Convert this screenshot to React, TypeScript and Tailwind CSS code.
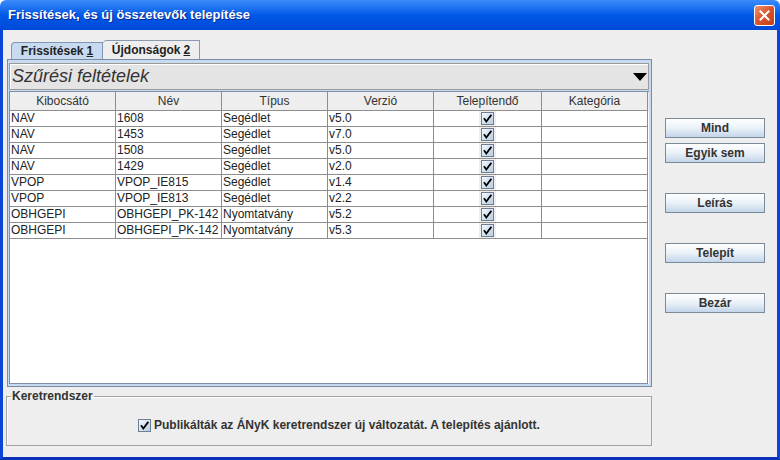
import React from "react";

type Row = {
  issuer: string;
  name: string;
  kind: string;
  version: string;
};

const ROWS: Row[] = [
  { issuer: "NAV", name: "1608", kind: "Segédlet", version: "v5.0" },
  { issuer: "NAV", name: "1453", kind: "Segédlet", version: "v7.0" },
  { issuer: "NAV", name: "1508", kind: "Segédlet", version: "v5.0" },
  { issuer: "NAV", name: "1429", kind: "Segédlet", version: "v2.0" },
  { issuer: "VPOP", name: "VPOP_IE815", kind: "Segédlet", version: "v1.4" },
  { issuer: "VPOP", name: "VPOP_IE813", kind: "Segédlet", version: "v2.2" },
  { issuer: "OBHGEPI", name: "OBHGEPI_PK-142", kind: "Nyomtatvány", version: "v5.2" },
  { issuer: "OBHGEPI", name: "OBHGEPI_PK-142", kind: "Nyomtatvány", version: "v5.3" },
];

const HEADERS = ["Kibocsátó", "Név", "Típus", "Verzió", "Telepítendő", "Kategória"];
const WIDTHS = ["w-[106px]", "w-[106px]", "w-[106px]", "w-[106px]", "w-[108px]", "w-[106px]"];

const FONT = { fontFamily: '"Liberation Sans", Arial, sans-serif' };

function CheckBox() {
  return (
    <span className="flex h-[13px] w-[13px] items-center justify-center border border-[#6f7f93] bg-gradient-to-br from-[#f4f8fc] to-[#b9cde4]">
      <svg width="9" height="9" viewBox="0 0 9 9">
        <path d="M1.5 5 L3.3 7.5 L7.8 1.5" fill="none" stroke="#000" strokeWidth="1.8" strokeLinecap="square" />
      </svg>
    </span>
  );
}

function SideButton({ label, className = "" }: { label: string; className?: string }) {
  return (
    <button
      className={`h-[20px] w-[100px] border border-[#7a8a99] bg-gradient-to-b from-[#ffffff] via-[#eaf1f8] to-[#c3d5ea] text-[12px] font-bold text-[#333333] ${className}`}
    >
      {label}
    </button>
  );
}

export default function App() {
  return (
    <div className="flex h-[460px] w-[780px] flex-col" style={FONT}>
      {/* title bar */}
      <div className="flex h-[30px] items-center justify-between rounded-t-[6px] bg-gradient-to-b from-[#3a8cf9] via-[#0058e8] to-[#0049d8] pl-[8px] pr-[5px]">
        <span className="text-[13px] font-bold text-white [text-shadow:1px_1px_0_#0a2a8a]">
          Frissítések, és új összetevők telepítése
        </span>
        <span className="flex h-[21px] w-[21px] items-center justify-center rounded-[3px] border border-white bg-gradient-to-br from-[#f0906c] via-[#d9532b] to-[#c2401a]">
          <svg width="11" height="11" viewBox="0 0 11 11">
            <path d="M1.5 1.5 L9.5 9.5 M9.5 1.5 L1.5 9.5" stroke="#fff" strokeWidth="2" strokeLinecap="square" />
          </svg>
        </span>
      </div>

      {/* body */}
      <div className="flex flex-1 flex-col border-x-[3px] border-b-[3px] border-x-[#0b45d8] border-b-[#0a2fb8] bg-[#eeeeee] pt-[10px]">
        <div className="flex">
          {/* tabs + panel */}
          <div className="ml-[4px] flex w-[645px] flex-col">
            <div className="flex h-[19px] items-end pl-[4px]">
              <div className="flex h-[17px] w-[92px] items-center justify-center rounded-tl-[4px] border border-b-0 border-[#7f97b4] bg-[#c8daf0] text-[12px] font-bold text-[#222]">
                Frissítések <span className="ml-[3px] underline">1</span>
              </div>
              <div className="flex h-[19px] w-[97px] items-center justify-center rounded-tl-[4px] border border-b-0 border-l-0 border-[#8a9ab0] bg-[#eeeeee] text-[12px] font-bold text-[#222]">
                Újdonságok <span className="ml-[3px] underline">2</span>
              </div>
            </div>

            <div className="flex h-[328px] flex-col border border-[#7a8ca4] bg-[#c8daf0] pb-[2px] pl-[1px] pr-[2px] pt-[3px]">
              {/* filter bar */}
              <div className="flex h-[27px] items-center justify-between border border-[#9a9a9a] bg-[#e4e4e4] pl-[2px] pr-[1px] shadow-[inset_1px_1px_0_#ffffff]">
                <span className="text-[18px] italic text-[#333333]">Szűrési feltételek</span>
                <svg width="14" height="8" viewBox="0 0 14 8">
                  <path d="M0 0 H14 L7 8 Z" fill="#000" />
                </svg>
              </div>

              {/* table */}
              <div className="mt-[1px] flex flex-1 flex-col border-l border-t border-[#7f8fa6] bg-white">
                <div className="flex h-[19px] bg-[#eeeeee]">
                  {HEADERS.map((h, i) => (
                    <div
                      key={h}
                      className={`${WIDTHS[i]} flex items-center justify-center border-b border-r border-[#8e8e8e] text-[12px] text-[#333333]`}
                    >
                      {h}
                    </div>
                  ))}
                </div>
                {ROWS.map((r, idx) => (
                  <div key={idx} className="flex h-[16px] text-[12px] text-[#222]">
                    {[r.issuer, r.name, r.kind, r.version].map((v, i) => (
                      <div
                        key={i}
                        className={`${WIDTHS[i]} flex items-center overflow-hidden whitespace-nowrap border-b border-r border-[#8e8e8e] pl-[1px] leading-[15px]`}
                      >
                        {v}
                      </div>
                    ))}
                    <div className={`${WIDTHS[4]} flex items-center justify-center border-b border-r border-[#8e8e8e]`}>
                      <span className="flex h-[15px] w-[17px] items-center justify-center bg-[#eeeeee]">
                        <CheckBox />
                      </span>
                    </div>
                    <div className={`${WIDTHS[5]} border-b border-r border-[#8e8e8e]`} />
                  </div>
                ))}
                <div className="flex-1 border-b border-r border-[#7f8fa6] w-[638px]" />
              </div>
            </div>
          </div>

          {/* buttons */}
          <div className="ml-[13px] flex flex-col pt-[78px]">
            <SideButton label="Mind" />
            <SideButton label="Egyik sem" className="mt-[5px]" />
            <SideButton label="Leírás" className="mt-[30px]" />
            <SideButton label="Telepít" className="mt-[30px]" />
            <SideButton label="Bezár" className="mt-[30px]" />
          </div>
        </div>

        {/* framework group */}
        <fieldset className="ml-[3px] mt-[2px] h-[57px] w-[646px] border border-[#a3a3a3] px-[4px] shadow-[inset_1px_1px_0_#ffffff]">
          <legend className="px-[1px] text-[12px] font-bold leading-[14px] text-[#333333]">Keretrendszer</legend>
          <div className="mt-[13px] flex items-center pl-[127px]">
            <CheckBox />
            <span className="ml-[3px] text-[12px] font-bold text-[#333333]">
              Publikálták az ÁNyK keretrendszer új változatát. A telepítés ajánlott.
            </span>
          </div>
        </fieldset>
      </div>
    </div>
  );
}
